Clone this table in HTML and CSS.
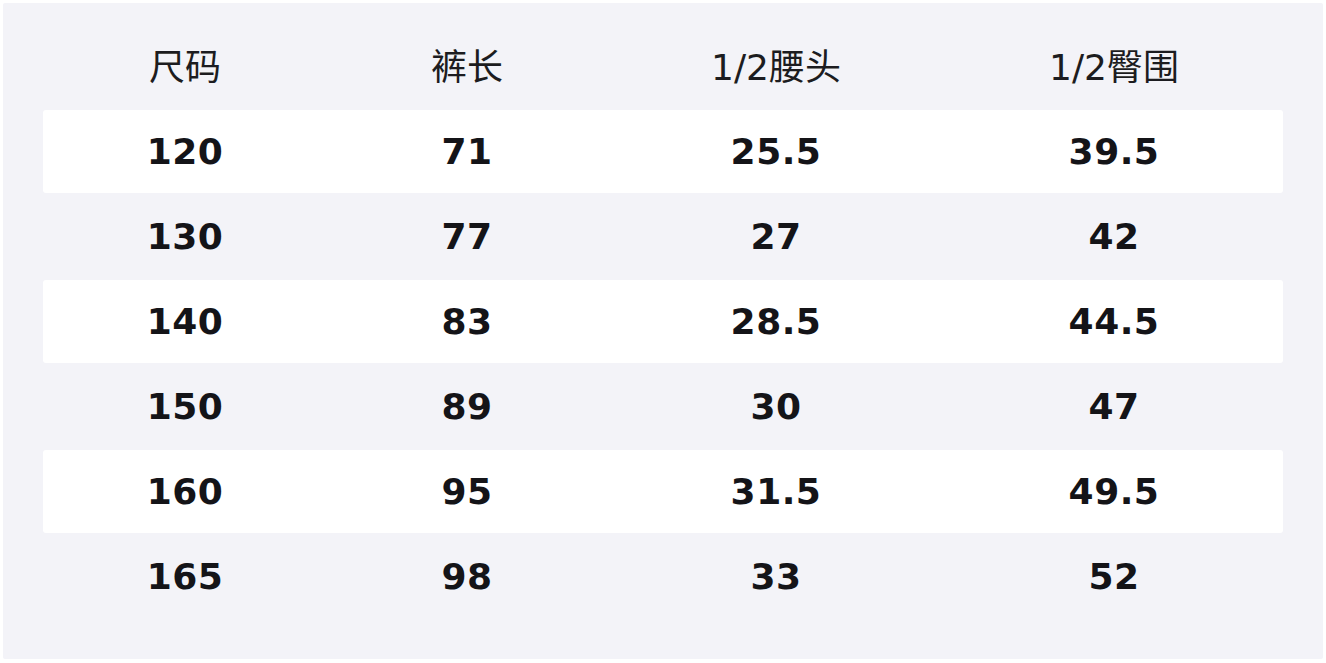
FILE: index.html
```html
<!DOCTYPE html>
<html lang="zh">
<head>
<meta charset="utf-8">
<title>尺码表</title>
<link rel="stylesheet" href="styles.css">
</head>
<body>
<div class="panel">
  <div class="table">
    <div class="row head">
      <div class="cell">尺码</div>
      <div class="cell">裤长</div>
      <div class="cell">1/2腰头</div>
      <div class="cell">1/2臀围</div>
    </div>
    <div class="row alt">
      <div class="cell">120</div><div class="cell">71</div><div class="cell">25.5</div><div class="cell">39.5</div>
    </div>
    <div class="row">
      <div class="cell">130</div><div class="cell">77</div><div class="cell">27</div><div class="cell">42</div>
    </div>
    <div class="row alt">
      <div class="cell">140</div><div class="cell">83</div><div class="cell">28.5</div><div class="cell">44.5</div>
    </div>
    <div class="row">
      <div class="cell">150</div><div class="cell">89</div><div class="cell">30</div><div class="cell">47</div>
    </div>
    <div class="row alt">
      <div class="cell">160</div><div class="cell">95</div><div class="cell">31.5</div><div class="cell">49.5</div>
    </div>
    <div class="row">
      <div class="cell">165</div><div class="cell">98</div><div class="cell">33</div><div class="cell">52</div>
    </div>
  </div>
</div>
</body>
</html>
```

FILE: styles.css
```css
html, body {
  margin: 0;
  padding: 0;
  background: #ffffff;
}
body {
  padding: 3px;
  font-family: "DejaVu Sans", "Noto Sans CJK SC", sans-serif;
}
.panel {
  width: 1320px;
  height: 656px;
  box-sizing: border-box;
  background: #f3f3f8;
  padding: 22px 40px 0 40px;
  border-radius: 2px;
}
.table {
  display: flex;
  flex-direction: column;
}
.row {
  display: grid;
  grid-template-columns: 284fr 280fr 338fr 338fr;
  height: 87px;
  align-items: center;
  border-radius: 3px;
}
.row.head {
  height: 85px;
}
.row.alt {
  height: 83px;
  background: #ffffff;
}
.cell {
  text-align: center;
  font-size: 36px;
  font-weight: 700;
  letter-spacing: 0.5px;
  color: #141418;
  line-height: 1;
}
.head .cell {
  font-weight: 400;
  letter-spacing: 0;
  color: #1c1c20;
}
```
